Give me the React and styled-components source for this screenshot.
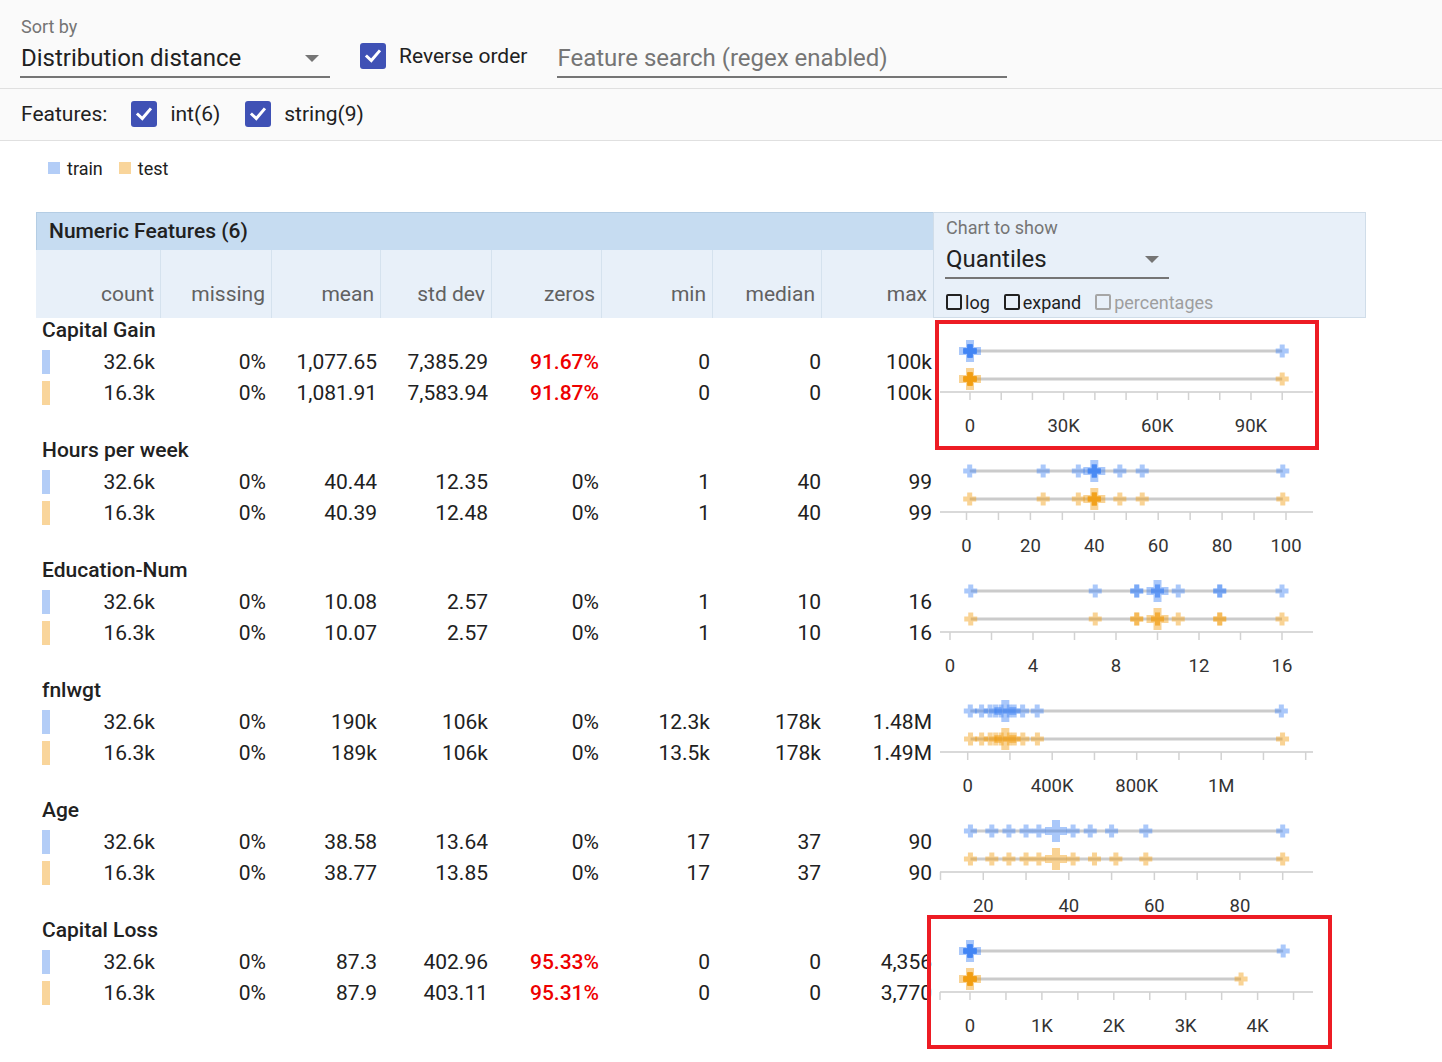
import React from "react";
import styled, { createGlobalStyle } from "styled-components";

const GlobalStyle = createGlobalStyle`
  body {
    margin: 0;
    background: #ffffff;
    font-family: Roboto, "Liberation Sans", sans-serif;
    color: #212121;
  }
`;

const BLUE = "#4285f4";
const ORANGE = "#f29d12";

const range = (a, b, step) => {
  const out = [];
  for (let v = a; v <= b + 1e-9; v += step) out.push(v);
  return out;
};
const zeros = (n) => Array(n).fill(0);

const features = [
  {
    name: "Capital Gain",
    rows: [
      ["32.6k", "0%", "1,077.65", "7,385.29", "91.67%", "0", "0", "100k"],
      ["16.3k", "0%", "1,081.91", "7,583.94", "91.87%", "0", "0", "100k"],
    ],
    alertZeros: true,
    frame: { left: 2, top: 2, width: 384, height: 130 },
    chart: {
      v0: 0, x0: 37, k: 0.003122,
      ticks: range(0, 100000, 10000),
      labels: [[0, "0"], [30000, "30K"], [60000, "60K"], [90000, "90K"]],
      train: [...zeros(10), 99999],
      test: [...zeros(10), 99999],
    },
  },
  {
    name: "Hours per week",
    rows: [
      ["32.6k", "0%", "40.44", "12.35", "0%", "1", "40", "99"],
      ["16.3k", "0%", "40.39", "12.48", "0%", "1", "40", "99"],
    ],
    chart: {
      v0: 0, x0: 33.5, k: 3.195,
      ticks: range(0, 100, 10),
      labels: [[0, "0"], [20, "20"], [40, "40"], [60, "60"], [80, "80"], [100, "100"]],
      train: [1, 24, 35, 40, 40, 40, 40, 40, 48, 55, 99],
      test: [1, 24, 35, 40, 40, 40, 40, 40, 48, 55, 99],
    },
  },
  {
    name: "Education-Num",
    rows: [
      ["32.6k", "0%", "10.08", "2.57", "0%", "1", "10", "16"],
      ["16.3k", "0%", "10.07", "2.57", "0%", "1", "10", "16"],
    ],
    chart: {
      v0: 0, x0: 17, k: 20.75,
      ticks: range(0, 16, 2),
      labels: [[0, "0"], [4, "4"], [8, "8"], [12, "12"], [16, "16"]],
      train: [1, 7, 9, 9, 10, 10, 10, 11, 13, 13, 16],
      test: [1, 7, 9, 9, 10, 10, 10, 11, 13, 13, 16],
    },
  },
  {
    name: "fnlwgt",
    rows: [
      ["32.6k", "0%", "190k", "106k", "0%", "12.3k", "178k", "1.48M"],
      ["16.3k", "0%", "189k", "106k", "0%", "13.5k", "178k", "1.49M"],
    ],
    chart: {
      v0: 0, x0: 34.7, k: 0.00021125,
      ticks: range(0, 1600000, 200000),
      labels: [[0, "0"], [400000, "400K"], [800000, "800K"], [1200000, "1M"]],
      train: [12285, 65700, 106000, 132000, 158000, 178000, 197000, 220000, 260000, 329000, 1484705],
      test: [13492, 66000, 106500, 132500, 158500, 178000, 197500, 220500, 261000, 330000, 1490400],
    },
  },
  {
    name: "Age",
    rows: [
      ["32.6k", "0%", "38.58", "13.64", "0%", "17", "37", "90"],
      ["16.3k", "0%", "38.77", "13.85", "0%", "17", "37", "90"],
    ],
    chart: {
      v0: 10, x0: 7.5, k: 4.2775,
      ticks: range(10, 90, 10),
      labels: [[20, "20"], [40, "40"], [60, "60"], [80, "80"]],
      train: [17, 22, 26, 30, 33, 37, 41, 45, 50, 58, 90],
      test: [17, 22, 26, 30, 33, 37, 41, 46, 51, 58, 90],
    },
  },
  {
    name: "Capital Loss",
    rows: [
      ["32.6k", "0%", "87.3", "402.96", "95.33%", "0", "0", "4,356"],
      ["16.3k", "0%", "87.9", "403.11", "95.31%", "0", "0", "3,770"],
    ],
    alertZeros: true,
    frame: { left: -6, top: -3, width: 405, height: 134 },
    chart: {
      v0: 0, x0: 37, k: 0.0719,
      ticks: [-417, ...range(0, 4500, 500)],
      labels: [[0, "0"], [1000, "1K"], [2000, "2K"], [3000, "3K"], [4000, "4K"]],
      train: [...zeros(10), 4356],
      test: [...zeros(10), 3770],
    },
  },
];

const headColumns = ["count", "missing", "mean", "std dev", "zeros", "min", "median", "max"];
const headWidths = [125, 111, 109, 111, 110, 111, 109, 111];

/* ---------- toolbar ---------- */

const Toolbar = styled.div`
  display: flex;
  align-items: flex-start;
  gap: 30px;
  height: 89px;
  box-sizing: border-box;
  padding: 17px 0 0 20px;
  background: #fafafa;
  border-bottom: 1px solid #e0e0e0;
`;

const Field = styled.div`
  display: flex;
  flex-direction: column;
`;

const FieldLabel = styled.div`
  font-size: 18px;
  line-height: 20px;
  color: #757575;
  padding-left: 1px;
`;

const Select = styled.div`
  display: flex;
  align-items: center;
  justify-content: space-between;
  width: ${(p) => p.$width}px;
  margin-top: 6px;
  padding: 0 ${(p) => p.$arrowGap}px 3px 1px;
  box-sizing: border-box;
  font-size: 24px;
  line-height: 30px;
  color: #212121;
  border-bottom: 2px solid #757575;
`;

const Arrow = styled.span`
  width: 0;
  height: 0;
  border-left: 7px solid transparent;
  border-right: 7px solid transparent;
  border-top: 7px solid #757575;
`;

const SearchInput = styled.input`
  width: 450px;
  height: 35px;
  margin-top: 26px;
  box-sizing: border-box;
  border: none;
  border-bottom: 2px solid #757575;
  background: transparent;
  padding: 0 0 3px 0;
  font-family: Roboto, "Liberation Sans", sans-serif;
  font-size: 24px;
  color: #212121;
  outline: none;
  &::placeholder {
    color: #757575;
  }
`;

const CheckGroup = styled.label`
  display: flex;
  align-items: center;
  gap: 13px;
  height: 26px;
  margin-top: ${(p) => p.$top || 0}px;
  font-size: 21px;
  color: #212121;
`;

const CheckBox = styled.span`
  width: 26px;
  height: 26px;
  border-radius: 3px;
  background: #3f51b5;
  display: inline-flex;
  align-items: center;
  justify-content: center;
`;

const FeatureBar = styled.div`
  display: flex;
  align-items: center;
  height: 52px;
  box-sizing: border-box;
  padding: 0 0 2px 21px;
  background: #fafafa;
  border-bottom: 1px solid #e0e0e0;
  font-size: 21px;
  & > span {
    margin-right: 24px;
  }
  & > label + label {
    margin-left: 25px;
  }
`;

/* ---------- legend ---------- */

const Content = styled.div`
  padding: 0 0 30px 36px;
`;

const Legend = styled.div`
  display: flex;
  align-items: center;
  height: 20px;
  margin-top: 17px;
  padding-left: 12px;
  font-size: 18px;
  color: #212121;
`;

const Swatch = styled.span`
  width: ${(p) => p.$w}px;
  height: ${(p) => p.$h}px;
  background: ${(p) => (p.$test ? "#f9d59b" : "#b3cdf7")};
  flex: none;
`;

const LegendText = styled.span`
  margin: 0 16px 0 7px;
`;

/* ---------- table ---------- */

const Table = styled.div`
  margin-top: 34px;
  width: 1330px;
`;

const HeaderGrid = styled.div`
  display: grid;
  grid-template-columns: 897px 433px;
  height: 106px;
`;

const TitleBand = styled.div`
  height: 38px;
  box-sizing: border-box;
  padding-left: 12px;
  background: #c6dcf1;
  border-top: 1px solid #b4cde4;
  border-left: 1px solid #b4cde4;
  font-size: 21px;
  font-weight: 500;
  line-height: 37px;
  color: #212121;
`;

const ColumnHeads = styled.div`
  display: flex;
  height: 68px;
  background: #e8f0f9;
`;

const HeadCell = styled.div`
  width: ${(p) => p.$w}px;
  box-sizing: border-box;
  display: flex;
  align-items: flex-end;
  justify-content: flex-end;
  padding: 0 6px 12px 0;
  font-size: 21px;
  line-height: 24px;
  color: #616161;
  border-right: 1px solid #d5e2ee;
  &:last-child {
    border-right: none;
  }
`;

const ChartHeader = styled.div`
  box-sizing: border-box;
  padding: 5px 0 0 11px;
  background: #e8f0f9;
  border: 1px solid #d0dde9;
`;

const SmallChecks = styled.div`
  display: flex;
  align-items: center;
  margin-top: 12px;
  height: 22px;
  font-size: 18px;
  color: #212121;
`;

const SmallCheck = styled.span`
  display: inline-flex;
  align-items: center;
  gap: 3px;
  margin-right: 13px;
  color: ${(p) => (p.$muted ? "#9e9e9e" : "#212121")};
  &::before {
    content: "";
    width: 16px;
    height: 16px;
    box-sizing: border-box;
    border: 2px solid ${(p) => (p.$muted ? "#a6a6a6" : "#212121")};
    border-radius: 2px;
    margin-left: 1px;
  }
`;

const FeatureBlock = styled.div`
  display: grid;
  grid-template-columns: 897px 433px;
  height: 120px;
`;

const FeatureName = styled.div`
  height: 28px;
  padding-left: 6px;
  font-size: 21px;
  font-weight: 500;
  line-height: 24px;
  color: #212121;
`;

const DataRow = styled.div`
  display: grid;
  grid-template-columns: 121px repeat(6, 111px) 110px;
  height: 31px;
  align-items: center;
  font-size: 21px;
  line-height: 24px;
`;

const Cell = styled.div`
  text-align: right;
  padding-right: 2px;
  white-space: nowrap;
  color: ${(p) => (p.$alert ? "#ee0000" : "#212121")};
  font-weight: ${(p) => (p.$alert ? 500 : 400)};
  &:last-child {
    padding-right: 1px;
  }
`;

const CountCell = styled(Cell)`
  display: flex;
  align-items: center;
  justify-content: space-between;
  padding-left: 6px;
`;

const ChartCell = styled.div`
  position: relative;
  svg {
    display: block;
    overflow: visible;
  }
`;

const RedFrame = styled.div`
  position: absolute;
  left: ${(p) => p.$left}px;
  top: ${(p) => p.$top}px;
  width: ${(p) => p.$width}px;
  height: ${(p) => p.$height}px;
  box-sizing: border-box;
  border: 4px solid #ed1c24;
  pointer-events: none;
`;

/* ---------- drawings ---------- */

function Check() {
  return (
    <svg width="18" height="18" viewBox="0 0 18 18">
      <polyline points="3,9.5 7.3,13.5 15,4.5" fill="none" stroke="#fff" strokeWidth="3" strokeLinecap="square" />
    </svg>
  );
}

function crossPoints(cx, cy, s, t) {
  return [
    [cx - t, cy - s], [cx + t, cy - s], [cx + t, cy - t], [cx + s, cy - t],
    [cx + s, cy + t], [cx + t, cy + t], [cx + t, cy + s], [cx - t, cy + s],
    [cx - t, cy + t], [cx - s, cy + t], [cx - s, cy - t], [cx - t, cy - t],
  ]
    .map((p) => p.join(","))
    .join(" ");
}

function Series({ values, y, color, scale }) {
  const xs = values.map(scale);
  return (
    <g>
      <line x1={xs[0]} x2={xs[xs.length - 1]} y1={y} y2={y} stroke="#cbcbcb" strokeWidth="3" />
      {xs.map((x, i) =>
        i === 5 ? null : (
          <polygon key={i} points={crossPoints(x, y, 6.5, 2.5)} fill={color} fillOpacity="0.45" />
        )
      )}
      <polygon points={crossPoints(xs[5], y, 11, 4)} fill={color} fillOpacity="0.45" />
    </g>
  );
}

function QuantileChart({ chart }) {
  const scale = (v) => chart.x0 + (v - chart.v0) * chart.k;
  return (
    <svg width="433" height="120">
      <line x1="7" x2="380" y1="74" y2="74" stroke="#d9d9d9" strokeWidth="2" />
      {chart.ticks.map((t) => (
        <line key={t} x1={scale(t)} x2={scale(t)} y1="74" y2="82" stroke="#d2d2d2" strokeWidth="1.5" />
      ))}
      {chart.labels.map(([v, s]) => (
        <text
          key={s}
          x={scale(v)}
          y="114"
          textAnchor="middle"
          fontSize="18.5"
          fontFamily="Roboto, 'Liberation Sans', sans-serif"
          fill="#333"
        >
          {s}
        </text>
      ))}
      <Series values={chart.train} y={33} color={BLUE} scale={scale} />
      <Series values={chart.test} y={61} color={ORANGE} scale={scale} />
    </svg>
  );
}

/* ---------- page ---------- */

function App() {
  return (
    <>
      <GlobalStyle />
      <Toolbar>
        <Field>
          <FieldLabel>Sort by</FieldLabel>
          <Select $width={310} $arrowGap={11}>
            Distribution distance
            <Arrow />
          </Select>
        </Field>
        <CheckGroup $top={26}>
          <CheckBox>
            <Check />
          </CheckBox>
          Reverse order
        </CheckGroup>
        <SearchInput placeholder="Feature search (regex enabled)" />
      </Toolbar>

      <FeatureBar>
        <span>Features:</span>
        <CheckGroup>
          <CheckBox>
            <Check />
          </CheckBox>
          int(6)
        </CheckGroup>
        <CheckGroup>
          <CheckBox>
            <Check />
          </CheckBox>
          string(9)
        </CheckGroup>
      </FeatureBar>

      <Content>
        <Legend>
          <Swatch $w={12} $h={12} />
          <LegendText>train</LegendText>
          <Swatch $w={12} $h={12} $test />
          <LegendText>test</LegendText>
        </Legend>

        <Table>
          <HeaderGrid>
            <div>
              <TitleBand>Numeric Features (6)</TitleBand>
              <ColumnHeads>
                {headColumns.map((c, i) => (
                  <HeadCell key={c} $w={headWidths[i]}>
                    {c}
                  </HeadCell>
                ))}
              </ColumnHeads>
            </div>
            <ChartHeader>
              <FieldLabel>Chart to show</FieldLabel>
              <Select $width={224} $arrowGap={10}>
                Quantiles
                <Arrow />
              </Select>
              <SmallChecks>
                <SmallCheck>log</SmallCheck>
                <SmallCheck>expand</SmallCheck>
                <SmallCheck $muted>percentages</SmallCheck>
              </SmallChecks>
            </ChartHeader>
          </HeaderGrid>

          {features.map((f) => (
            <FeatureBlock key={f.name}>
              <div>
                <FeatureName>{f.name}</FeatureName>
                {f.rows.map((row, r) => (
                  <DataRow key={r}>
                    <CountCell>
                      <Swatch $w={8} $h={24} $test={r === 1} />
                      {row[0]}
                    </CountCell>
                    {row.slice(1).map((v, i) => (
                      <Cell key={i} $alert={f.alertZeros && i === 3}>
                        {v}
                      </Cell>
                    ))}
                  </DataRow>
                ))}
              </div>
              <ChartCell>
                <QuantileChart chart={f.chart} />
                {f.frame && (
                  <RedFrame
                    $left={f.frame.left}
                    $top={f.frame.top}
                    $width={f.frame.width}
                    $height={f.frame.height}
                  />
                )}
              </ChartCell>
            </FeatureBlock>
          ))}
        </Table>
      </Content>
    </>
  );
}

export default App;
